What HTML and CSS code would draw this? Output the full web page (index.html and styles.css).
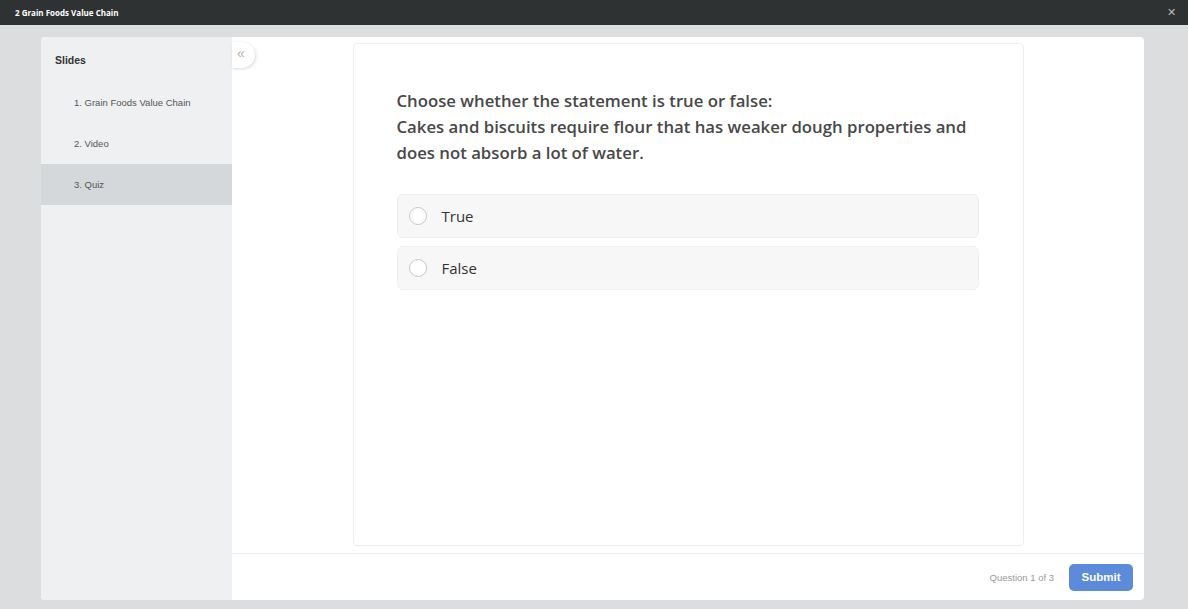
FILE: index.html
```html
<!DOCTYPE html>
<html lang="en">
  <head>
    <meta charset="UTF-8" />
    <title>2 Grain Foods Value Chain</title>
    <link rel="stylesheet" href="styles.css">
  </head>
  <body>
    <div class="topbar">
      <span class="topbar-title">2 Grain Foods Value Chain</span>
      <button class="button-close">&#10005;</button>
    </div>
    <div class="stage">
      <div class="panel">
        <div class="sidebar">
          <h4>Slides</h4>
          <div class="slide-item">1. Grain Foods Value Chain</div>
          <div class="slide-item">2. Video</div>
          <div class="slide-item active">3. Quiz</div>
        </div>
        <div class="main">
          <button class="button-collapse">&laquo;</button>
          <div class="content">
            <div class="card">
              <p class="question">
                Choose whether the statement is true or false:<br />
                Cakes and biscuits require flour that has weaker dough properties and does not absorb a lot of water.
              </p>
              <label class="option"><span class="radio"></span>True</label>
              <label class="option"><span class="radio"></span>False</label>
            </div>
          </div>
          <div class="footer">
            <span class="counter">Question 1 of 3</span>
            <button class="button-submit">Submit</button>
          </div>
        </div>
      </div>
    </div>
  </body>
</html>
```

FILE: styles.css
```css
:root {
  --bar-color: #2f3233;
  --stage-color: #dcdddf;
  --sidebar-color: #eff0f2;
  --active-color: #d5d8db;
  --text-color: #484848;
  --blue-color: #5b8bd9;
}

body {
  margin: 0;
  height: 100vh;
  display: flex;
  flex-direction: column;
  background-color: var(--stage-color);
  font-family: "Liberation Sans", Arial, sans-serif;
}

.topbar {
  height: 25px;
  background-color: var(--bar-color);
  display: flex;
  align-items: center;
  justify-content: space-between;
  padding: 0 12px 0 15px;
}

.topbar-title {
  color: #ffffff;
  font-family: "Open Sans", sans-serif;
  font-size: 8px;
  font-weight: bold;
}

.button-close {
  background: none;
  border: none;
  color: #b9bcbd;
  font-size: 11px;
  padding: 0;
  cursor: pointer;
}

.stage {
  flex: 1;
  padding: 12px 44px 9px 41px;
  display: flex;
}

.panel {
  flex: 1;
  display: flex;
  background-color: #ffffff;
  border-radius: 4px;
  overflow: hidden;
}

.sidebar {
  width: 191px;
  background-color: var(--sidebar-color);
}

.sidebar h4 {
  margin: 0;
  padding: 16px 14px 15px;
  font-size: 10.5px;
  line-height: 14px;
  color: #333333;
}

.slide-item {
  height: 41px;
  line-height: 41px;
  padding-left: 33px;
  font-size: 9.5px;
  color: #555555;
}

.slide-item.active {
  background-color: var(--active-color);
}

.main {
  flex: 1;
  display: flex;
  flex-direction: column;
  position: relative;
}

.button-collapse {
  position: absolute;
  left: 0;
  top: 5px;
  width: 23px;
  height: 26px;
  border: none;
  border-radius: 0 13px 13px 0;
  background-color: #ffffff;
  box-shadow: 1px 1px 3px rgba(0, 0, 0, 0.15);
  color: #b0b0b0;
  font-size: 14px;
  line-height: 20px;
  padding: 0 5px 4px 0;
  cursor: pointer;
}

.content {
  flex: 1;
  display: flex;
  justify-content: center;
  padding: 6px 0 7px;
}

.card {
  width: 582px;
  border: 1px solid #eeeeee;
  border-radius: 4px;
  padding: 44px 44px 0 43px;
}

.question {
  margin: 0 0 28px;
  font-family: "Open Sans", sans-serif;
  font-size: 16.75px;
  font-weight: 600;
  line-height: 26px;
  color: var(--text-color);
}

.option {
  display: flex;
  align-items: center;
  height: 42px;
  margin-bottom: 8px;
  padding-left: 11px;
  background-color: #f7f7f7;
  border: 1px solid #efefef;
  border-radius: 6px;
  font-family: "Open Sans", sans-serif;
  font-size: 15px;
  color: #333333;
}

.radio {
  width: 16px;
  height: 16px;
  border: 1px solid #c8c8c8;
  border-radius: 50%;
  background-color: #ffffff;
  margin-right: 15px;
}

.footer {
  height: 46px;
  border-top: 1px solid #eeeeee;
  display: flex;
  align-items: center;
  justify-content: flex-end;
  padding-right: 11px;
}

.counter {
  font-size: 9.5px;
  color: #999999;
  margin-right: 15px;
}

.button-submit {
  width: 64px;
  height: 27px;
  border: none;
  border-radius: 5px;
  background-color: var(--blue-color);
  color: #ffffff;
  font-family: "Liberation Sans", Arial, sans-serif;
  font-size: 11.5px;
  font-weight: bold;
  cursor: pointer;
}
```
